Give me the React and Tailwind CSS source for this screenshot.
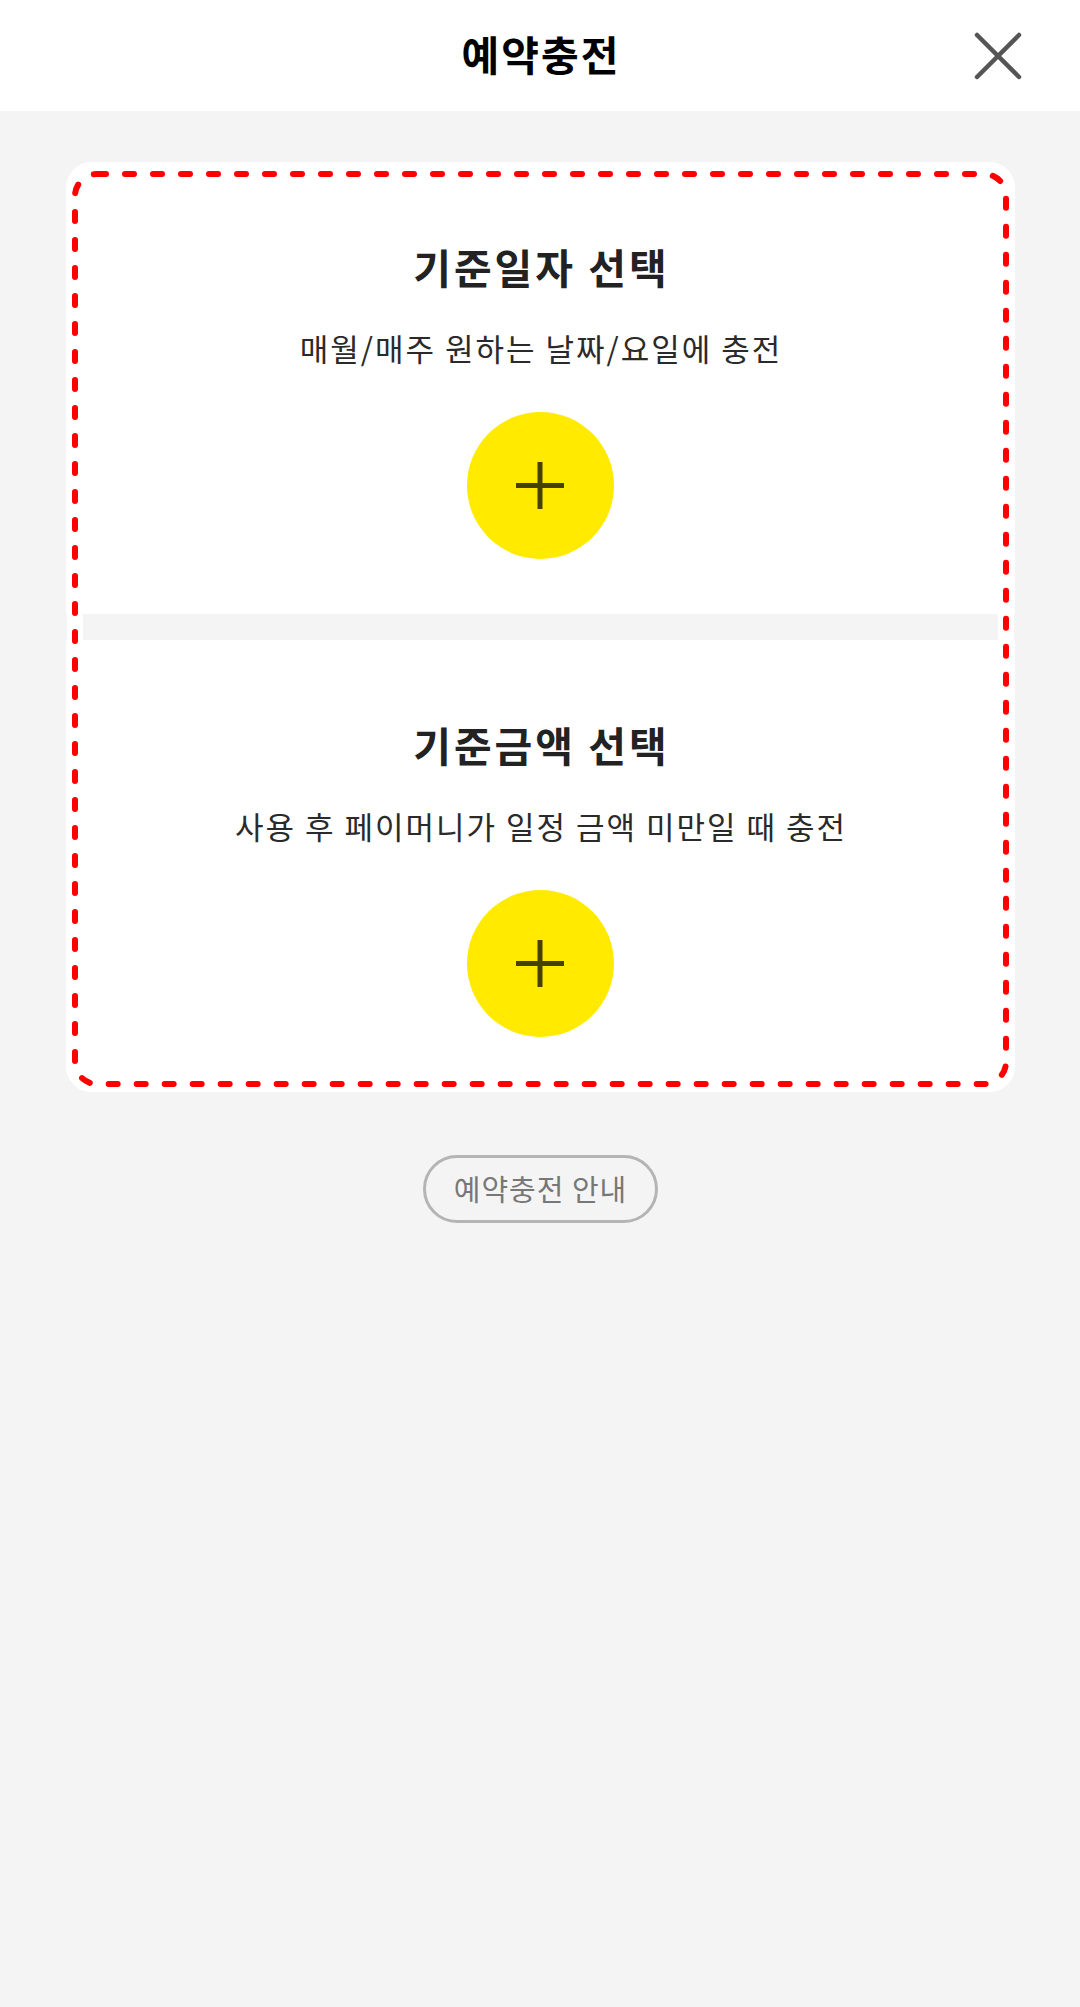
import React from 'react';

const font = { fontFamily: '"Noto Sans CJK KR", "Noto Sans", sans-serif' };

function PlusButton() {
    return (
        <button className="flex h-[147px] w-[147px] items-center justify-center rounded-full bg-[#ffea00]">
            <svg width="50" height="50" viewBox="0 0 50 50">
                <path d="M25 1v47M1 24.5h48" stroke="#000" strokeOpacity="0.72" strokeWidth="5" fill="none" />
            </svg>
        </button>
    );
}

function Section({ title, desc }) {
    return (
        <div className="flex flex-col items-center bg-white pt-[80px] pb-[55px]">
            <h2 className="h-[48px] pl-[3px] text-[41px] font-bold leading-[48px] tracking-[3px] text-[#222]">{title}</h2>
            <p className="mt-[38px] h-[40px] pl-[2px] text-[31px] leading-[40px] tracking-[2px] text-[#2a2a2a]">{desc}</p>
            <div className="mt-[44px]">
                <PlusButton />
            </div>
        </div>
    );
}

export default function App() {
    return (
        <div className="min-h-[2007px] w-full bg-[#f4f4f4]" style={font}>
            {/* header */}
            <div className="grid h-[111px] grid-cols-[1fr_auto_1fr] items-center bg-white">
                <div />
                <h1 className="-mt-[4px] pl-[2px] text-[41px] font-bold tracking-[2px] text-black">예약충전</h1>
                <div className="flex justify-end pr-[57px]">
                    <svg width="50" height="50" viewBox="0 0 50 50">
                        <path d="M4 4l42 42M46 4L4 46" stroke="#555" strokeWidth="4.5" strokeLinecap="round" fill="none" />
                    </svg>
                </div>
            </div>

            {/* card */}
            <div className="relative mx-auto mt-[51px] w-[949px] overflow-hidden rounded-[26px] bg-white">
                <Section title="기준일자 선택" desc="매월/매주 원하는 날짜/요일에 충전" />
                <div className="h-[26px] bg-[#f4f4f4]" />
                <Section title="기준금액 선택" desc="사용 후 페이머니가 일정 금액 미만일 때 충전" />

                {/* dashed highlight overlay */}
                <svg className="pointer-events-none absolute left-0 top-0" width="949" height="930" viewBox="0 0 949 930">
                    <rect x="9" y="12" width="931" height="910" rx="22" fill="none" stroke="#fff" strokeWidth="16" />
                    <rect x="9" y="12" width="931" height="910" rx="22" fill="none" stroke="#f00" strokeWidth="6" strokeDasharray="9 19" strokeLinecap="round" />
                </svg>
            </div>

            <div className="mt-[63px] flex justify-center">
                <button className="flex h-[68px] w-[235px] items-center justify-center rounded-full border-[3px] border-[#b4b4b4] pl-[1px] text-[29px] tracking-[1px] text-[#777]">
                    예약충전 안내
                </button>
            </div>
        </div>
    );
}
